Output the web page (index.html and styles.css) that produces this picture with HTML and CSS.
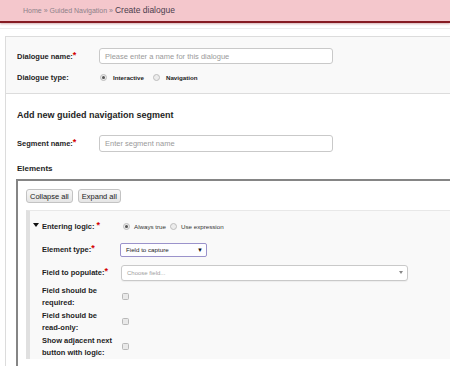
FILE: index.html
```html
<!DOCTYPE html>
<html lang="en">
<head>
<meta charset="utf-8">
<title>Create dialogue</title>
<link rel="stylesheet" href="styles.css">
</head>
<body>
<header class="topbar">
  <nav class="crumbs"><span class="crumb">Home</span> <span class="sep">»</span> <span class="crumb">Guided Navigation</span> <span class="sep">»</span> <span class="current">Create dialogue</span></nav>
</header>
<div class="rule"></div>
<main class="form">
  <section class="basics">
    <div class="row">
      <label class="lbl">Dialogue name:<span class="req">*</span></label>
      <div class="text-input"><span class="ph">Please enter a name for this dialogue</span></div>
    </div>
    <div class="row">
      <label class="lbl">Dialogue type:</label>
      <div class="radios radios-top">
        <span class="opt"><span class="radio on"></span>Interactive</span>
        <span class="opt"><span class="radio"></span>Navigation</span>
      </div>
    </div>
  </section>
  <section class="segment">
    <h2 class="title">Add new guided navigation segment</h2>
    <div class="row">
      <label class="lbl">Segment name:<span class="req">*</span></label>
      <div class="text-input tall"><span class="ph">Enter segment name</span></div>
    </div>
    <h3 class="subtitle">Elements</h3>
    <div class="elements">
      <div class="toolbar">
        <button class="btn">Collapse all</button>
        <button class="btn">Expand all</button>
      </div>
      <div class="element">
        <div class="erow">
          <label class="elbl"><span class="caret"></span>Entering logic: <span class="req">*</span></label>
          <div class="radios radios-el">
            <span class="opt"><span class="radio on"></span>Always true</span>
            <span class="opt"><span class="radio"></span>Use expression</span>
          </div>
        </div>
        <div class="erow">
          <label class="elbl">Element type:<span class="req">*</span></label>
          <div class="select"><span>Field to capture</span><span class="arrow">▼</span></div>
        </div>
        <div class="erow">
          <label class="elbl">Field to populate:<span class="req">*</span></label>
          <div class="chooser"><span class="ph small">Choose field...</span><span class="tri"></span></div>
        </div>
        <div class="erow two">
          <label class="elbl">Field should be required:</label>
          <span class="check"></span>
        </div>
        <div class="erow two">
          <label class="elbl">Field should be <span class="nowrap">read-only:</span></label>
          <span class="check"></span>
        </div>
        <div class="erow two">
          <label class="elbl">Show adjacent next button with logic:</label>
          <span class="check"></span>
        </div>
      </div>
    </div>
  </section>
</main>
</body>
</html>
```

FILE: styles.css
```css
* { box-sizing: border-box; margin: 0; padding: 0; }

body {
  font-family: "Liberation Sans", Arial, sans-serif;
  background: #fff;
  color: #1e1e1e;
  overflow: hidden;
}

.topbar {
  height: 23px;
  background: #f4c7cc;
  border-bottom: 2px solid #861c23;
  box-shadow: 0 1px 2px rgba(134, 28, 35, 0.35);
  padding-left: 23px;
  display: flex;
  align-items: center;
}

.crumbs { font-size: 7px; color: #8d8189; line-height: 21px; }
.current { font-size: 8.5px; color: #4b3d4c; }

.rule { margin-top: 5px; border-top: 1px solid #ececec; }

.form {
  margin: 7px 0 0 5px;
  border-top: 1px solid #dcdcdc;
  border-left: 1px solid #dcdcdc;
}

.basics {
  background: #f9f9f9;
  border-bottom: 1px solid #dcdcdc;
  padding: 11px 11px 8px;
  display: flex;
  flex-direction: column;
  gap: 5px;
}

.row { display: flex; align-items: center; min-height: 16px; }

.lbl {
  width: 82px;
  font-size: 7.5px;
  font-weight: bold;
  color: #1e1e1e;
}

.req { color: #d40000; font-weight: bold; font-size: 9px; line-height: 0; position: relative; top: -1px; }

.nowrap { white-space: nowrap; }

.text-input {
  width: 234px;
  height: 16px;
  background: #fff;
  border: 1px solid #c9c9c9;
  border-radius: 3px;
  padding-left: 5px;
  display: flex;
  align-items: center;
}
.text-input.tall { height: 17px; }

.ph { font-size: 7.5px; color: #9a9a9a; white-space: nowrap; }
.ph.small { font-size: 6px; color: #a0a0a0; }

.radios { display: flex; align-items: center; font-size: 6.2px; color: #222; }
.opt { display: flex; align-items: center; }
.radios-top { font-weight: bold; gap: 9px; padding-left: 1px; }
.radios-top .radio { margin-right: 6px; }
.radios-el { gap: 4px; padding-left: 3px; color: #333; }
.radios-el .radio { margin-right: 4px; }

.radio {
  width: 7px;
  height: 7px;
  border-radius: 50%;
  border: 1px solid #bdbdbd;
  background: #ececec;
  display: inline-flex;
  align-items: center;
  justify-content: center;
}
.radio.on::after {
  content: "";
  width: 3px;
  height: 3px;
  border-radius: 50%;
  background: #555;
}

.segment { padding: 15px 0 0 11px; }

.title { font-size: 9px; line-height: 12px; font-weight: bold; margin-bottom: 14px; color: #1e1e1e; }

.subtitle { font-size: 8px; line-height: 10px; font-weight: bold; margin: 12px 0 5px; color: #1e1e1e; }

.elements {
  margin-left: -1px;
  border-top: 2px solid #858585;
  border-left: 2px solid #858585;
  padding: 8px 0 8px 8px;
}

.toolbar { display: flex; gap: 5px; }

.btn {
  font-family: "Liberation Sans", Arial, sans-serif;
  font-size: 7.5px;
  color: #222;
  height: 14px;
  padding: 0 3px;
  border: 1px solid #c3c3c3;
  border-radius: 3px;
  background: linear-gradient(#f7f7f7, #e5e5e5);
}

.element {
  margin-top: 7px;
  background: #f9f9f9;
  border-top: 1px solid #e8e8e8;
  border-left: 4px solid #e0e0e0;
  padding: 4px 0 0 12px;
}

.erow { display: flex; align-items: center; min-height: 23px; }
.erow.two { min-height: 25px; }

.elbl {
  width: 78px;
  font-size: 7.5px;
  line-height: 12px;
  font-weight: bold;
  color: #1e1e1e;
}

.caret {
  display: inline-block;
  width: 0;
  height: 0;
  border-left: 3px solid transparent;
  border-right: 3px solid transparent;
  border-top: 4px solid #111;
  margin-left: -9px;
  margin-right: 3px;
  vertical-align: 2px;
}

.select {
  width: 87px;
  height: 14px;
  border: 1px solid #9a92cb;
  border-radius: 2px;
  background: #fdfdff;
  padding: 0 3px 0 5px;
  display: flex;
  align-items: center;
  justify-content: space-between;
  font-size: 6.2px;
  color: #222;
}
.select .arrow { font-size: 6px; color: #111; }

.chooser {
  margin-left: 1px;
  width: 287px;
  height: 16px;
  border: 1px solid #c9c9c9;
  border-radius: 3px;
  background: #fff;
  box-shadow: 0 1px 1px rgba(0, 0, 0, 0.05);
  padding: 0 4px 0 5px;
  display: flex;
  align-items: center;
  justify-content: space-between;
}
.tri {
  width: 0;
  height: 0;
  border-left: 2.5px solid transparent;
  border-right: 2.5px solid transparent;
  border-top: 3px solid #888;
}

.check {
  width: 7px;
  height: 7px;
  margin-left: 2px;
  border: 1px solid #b8b8b8;
  border-radius: 1.5px;
  background: #e9e9e9;
}
```
